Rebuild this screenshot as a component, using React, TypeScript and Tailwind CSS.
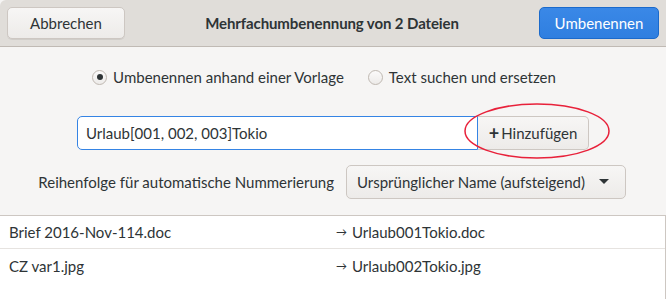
import React from "react";

export default function App() {
  return (
    <div
      className="relative w-[666px] h-[299px] overflow-hidden bg-[#f6f5f4] text-[#2e3436] flex flex-col"
      style={{ fontFamily: 'Lato, "Noto Sans", sans-serif' }}
    >
      {/* Header bar */}
      <div className="h-[47px] shrink-0 bg-[#e0ddd9] border-b border-[#c0bab4] flex items-center justify-between px-[7px] rounded-tl-[6px]">
        <button className="w-[118px] h-[32px] rounded-[5px] border border-[#cdc7c2] bg-gradient-to-b from-[#f7f6f5] to-[#edebe9] text-[15px] text-[#2e3436] shadow-[0_1px_0_rgba(0,0,0,0.07)]">
          Abbrechen
        </button>
        <div className="text-[15px] font-bold text-[#2e3436] tracking-[-0.1px]">Mehrfachumbenennung von 2 Dateien</div>
        <button className="w-[120px] h-[32px] rounded-[5px] border border-[#1b6acb] bg-gradient-to-b from-[#3a88e7] to-[#2f7fe0] text-[15px] text-white">
          Umbenennen
        </button>
      </div>

      {/* Radios */}
      <div className="flex items-center justify-center gap-[24px] mt-[21px] h-[18px] pr-[18px]">
        <label className="flex items-center gap-[6px] text-[15px]">
          <span className="w-[15px] h-[15px] rounded-full border border-[#bfb8b1] bg-gradient-to-b from-[#fbfafa] to-[#edebe9] flex items-center justify-center">
            <span className="w-[6px] h-[6px] rounded-full bg-[#2e3436]" />
          </span>
          Umbenennen anhand einer Vorlage
        </label>
        <label className="flex items-center gap-[6px] text-[15px]">
          <span className="w-[15px] h-[15px] rounded-full border border-[#bfb8b1] bg-gradient-to-b from-[#fbfafa] to-[#edebe9]" />
          Text suchen und ersetzen
        </label>
      </div>

      {/* Entry + button */}
      <div className="flex mt-[30px] ml-[77px] h-[34px]">
        <div className="w-[401px] h-full bg-white border border-[#3584e4] rounded-l-[5px] flex items-center pl-[8px] text-[15px]">
          Urlaub[001, 002, 003]Tokio
        </div>
        <button className="w-[111px] h-full rounded-r-[5px] border border-l-0 border-[#cdc7c2] bg-gradient-to-b from-[#f7f6f5] to-[#edebe9] text-[15px] flex items-center justify-center gap-[2px]">
          <span className="text-[18px] font-bold leading-none -mt-[1px]">+</span>
          Hinzufügen
        </button>
      </div>

      {/* Numbering order */}
      <div className="flex items-center mt-[15px] h-[34px]">
        <div className="w-[335px] text-right text-[15px] pr-[1px]">Reihenfolge für automatische Nummerierung</div>
        <button className="ml-[11px] w-[280px] h-full rounded-[5px] border border-[#cdc7c2] bg-gradient-to-b from-[#f7f6f5] to-[#edebe9] text-[15px] flex items-center justify-between pl-[10px] pr-[16px]">
          <span>Ursprünglicher Name (aufsteigend)</span>
          <svg width="10" height="6" viewBox="0 0 10 6"><path d="M0 0 L10 0 L5 5 Z" fill="#2e3436" /></svg>
        </button>
      </div>

      {/* File list */}
      <div className="mt-[16px] flex-1 bg-white border-t border-r border-[#cdc7c2] flex flex-col">
        <div className="h-[33px] border-b border-[#e6e3e0] flex items-center text-[15px]">
          <span className="w-[336px] pl-[9px]">Brief 2016-Nov-114.doc</span>
          <span className="w-[16px] text-[11px]">→</span>
          <span>Urlaub001Tokio.doc</span>
        </div>
        <div className="h-[35px] flex items-center text-[15px]">
          <span className="w-[336px] pl-[9px]">CZ var1.jpg</span>
          <span className="w-[16px] text-[11px]">→</span>
          <span>Urlaub002Tokio.jpg</span>
        </div>
      </div>

      {/* Red annotation ellipse */}
      <svg className="absolute left-0 top-0 pointer-events-none" width="666" height="299">
        <ellipse cx="537" cy="131" rx="72" ry="27" fill="none" stroke="#e8213a" strokeWidth="1.5" />
      </svg>
    </div>
  );
}
